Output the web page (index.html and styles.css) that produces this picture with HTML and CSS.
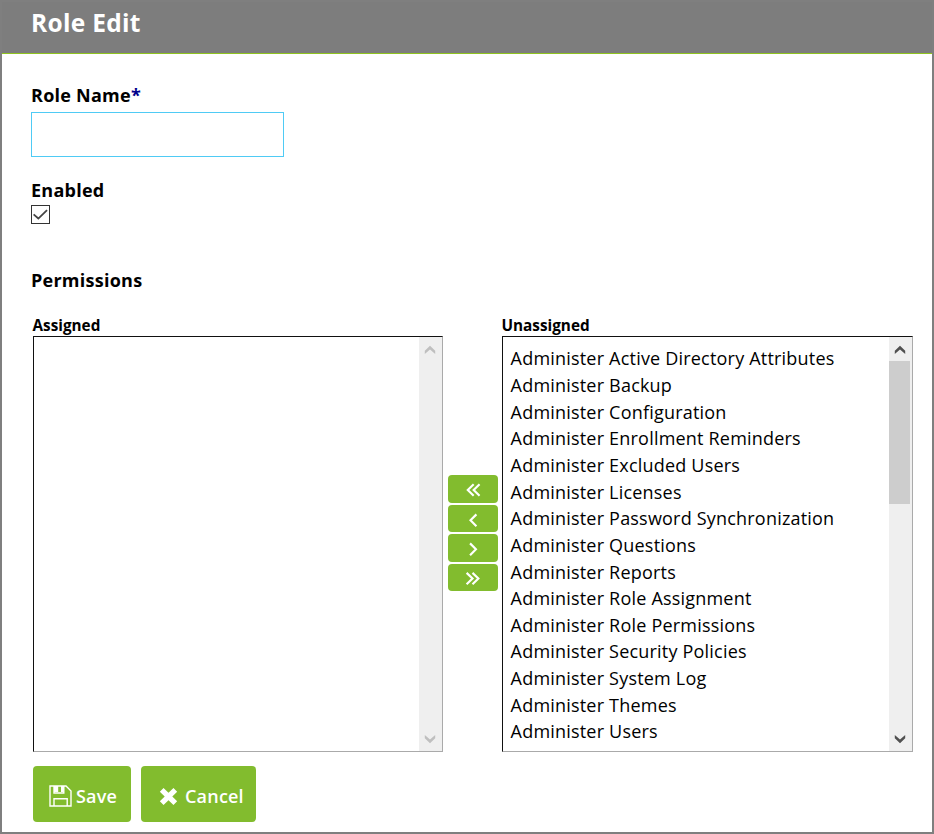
FILE: index.html
```html
<!DOCTYPE html>
<html lang="en">
<head>
<meta charset="utf-8">
<title>Role Edit</title>
<link rel="stylesheet" href="styles.css">
</head>
<body>
<div class="window">
  <header class="header"><h1>Role Edit</h1></header>
  <main class="form">
    <label class="label" for="role">Role Name<span class="required">*</span></label>
    <input class="text-input" id="role" type="text">
    <div class="label enabled-label">Enabled</div>
    <div class="checkbox" role="checkbox" aria-checked="true" aria-label="Enabled">
      <svg viewBox="0 0 19 19"><path d="M1.800 9.300 7.100 14 16.800 4.500"/></svg>
    </div>
    <h2 class="label permissions-label">Permissions</h2>
    <div class="picker">
      <section class="column">
        <h3>Assigned</h3>
        <div class="listbox">
          <ul></ul>
          <div class="scrollbar disabled">
            <svg class="up" viewBox="0 0 12 10"><path d="M.8 9V5.800L6 .8l5.200 5V9L6 4.600z"/></svg>
            <svg class="down" viewBox="0 0 12 10"><path d="M.8 1v3.200l5.200 5 5.200-5V1L6 5.400z"/></svg>
          </div>
        </div>
      </section>
      <div class="moves">
        <button aria-label="Assign all"><svg viewBox="0 0 50 27"><path d="M26.200 9.200 20.200 15l6 5.800M32.200 9.200l-6 5.800 6 5.800"/></svg></button>
        <button aria-label="Assign"><svg viewBox="0 0 50 27"><path d="M29 9.300 23 15.300l6 6"/></svg></button>
        <button aria-label="Unassign"><svg viewBox="0 0 50 27"><path d="M22.500 9.300l6 6-6 6"/></svg></button>
        <button aria-label="Unassign all"><svg viewBox="0 0 50 27"><path d="M19 8.800l6 5.800-6 5.800M25 8.800l6 5.800-6 5.800"/></svg></button>
      </div>
      <section class="column">
        <h3>Unassigned</h3>
        <div class="listbox">
          <ul>
            <li>Administer Active Directory Attributes</li>
            <li>Administer Backup</li>
            <li>Administer Configuration</li>
            <li>Administer Enrollment Reminders</li>
            <li>Administer Excluded Users</li>
            <li>Administer Licenses</li>
            <li>Administer Password Synchronization</li>
            <li>Administer Questions</li>
            <li>Administer Reports</li>
            <li>Administer Role Assignment</li>
            <li>Administer Role Permissions</li>
            <li>Administer Security Policies</li>
            <li>Administer System Log</li>
            <li>Administer Themes</li>
            <li>Administer Users</li>
          </ul>
          <div class="scrollbar">
            <svg class="up" viewBox="0 0 12 10"><path d="M.8 9V5.800L6 .8l5.200 5V9L6 4.600z"/></svg>
            <div class="thumb"></div>
            <svg class="down" viewBox="0 0 12 10"><path d="M.8 1v3.200l5.200 5 5.200-5V1L6 5.400z"/></svg>
          </div>
        </div>
      </section>
    </div>
    <div class="actions">
      <button class="save">
        <svg viewBox="0 0 23 22"><path class="line" d="M1 1h16l5 5v15H1zM5 21v-7.300h13.200V21M5 1v7h9.800V1"/><path d="M5 1h4.200v6H5zM12 1h2.800v6H12z"/></svg>
        <span>Save</span>
      </button>
      <button class="cancel">
        <svg viewBox="0 0 18 18"><path d="M4.300.9 9 5.500 13.700.9l3.500 3.500-4.600 4.600 4.600 4.600-3.500 3.500L9 12.500l-4.700 4.600-3.500-3.500L5.400 9 .8 4.400z"/></svg>
        <span>Cancel</span>
      </button>
    </div>
  </main>
</div>
</body>
</html>
```
FILE: styles.css
```css
* { box-sizing: border-box; }
body {
  margin: 0;
  font-family: "Open Sans", sans-serif;
  color: #000;
  background: #fff;
}
h1, h2, h3, ul { margin: 0; padding: 0; }
button { border: 0; padding: 0; color: #fff; background: #82bc2e; font-family: inherit; }
.window {
  height: 834px;
  border: 2px solid #7f7f7f;
  overflow: hidden;
}
.header {
  height: 52px;
  padding: 3px 0 0 29px;
  background: #7d7d7d;
  border-bottom: 1px solid #8fc31f;
}
.header h1 { font-size: 24.5px; line-height: 36px; font-weight: 700; letter-spacing: 0.3px; color: #fff; }
.form { padding: 28px 18px 0 29px; }
.label {
  display: block;
  font-size: 18px;
  line-height: 26px;
  font-weight: 700;
  letter-spacing: 0.25px;
}
.required { color: #00008b; }
.text-input {
  display: block;
  width: 253px;
  height: 45px;
  margin-top: 4px;
  border: 1px solid #4fcbf5;
  outline: 0;
  background: #fff;
}
.enabled-label { margin-top: 20px; }
.checkbox {
  width: 19px;
  height: 19px;
  margin-top: 2px;
  border: 1px solid #333;
}
.checkbox svg { display: block; width: 17px; height: 17px; fill: none; stroke: #444; stroke-width: 2; }
.permissions-label { margin-top: 43px; }
.picker { display: flex; margin: 21px 0 0 2px; }
.column { width: 410px; }
.column h3 { height: 22px; font-size: 15.3px; line-height: 22px; font-weight: 700; margin-left: -0.5px; }
.listbox {
  display: flex;
  height: 416px;
  border: 1px solid #aaa;
  border-top-color: #111;
  border-left-color: #111;
}
.listbox ul { flex: 1; padding: 8.4px 0 0 7.6px; list-style: none; }
.listbox li { font-size: 18px; line-height: 26.64px; letter-spacing: 0.2px; white-space: nowrap; }
.scrollbar {
  display: flex;
  flex-direction: column;
  align-items: center;
  width: 23px;
  padding: 8px 2px 0 0;
  background: #efefef;
  fill: #505050;
}
.disabled { fill: #bfbfbf; }
.scrollbar svg { width: 12px; height: 10px; }
.scrollbar .down { margin: auto 0 7px; }
.thumb { width: 21px; height: 143px; margin-top: 6px; background: #cdcdcd; }
.moves {
  display: flex;
  flex-direction: column;
  gap: 2px;
  width: 50px;
  margin: 161px 4px 0 5px;
}
.column:last-child { width: 411px; }
.moves button { height: 27.6px; border-radius: 4px; }
.moves svg { display: block; width: 49px; height: 27px; fill: none; stroke: #fff; stroke-width: 2.2; }
.actions { display: flex; gap: 10px; margin: 14px 0 0 2px; }
.actions button {
  display: flex;
  align-items: center;
  height: 56px;
  padding-top: 4px;
  border-radius: 4px;
  font-size: 18px;
  line-height: 26px;
  font-weight: 600;
  letter-spacing: 0.2px;
}
.actions svg { fill: #fff; }
.save { width: 98px; padding-left: 16px; gap: 4px; }
.save svg { width: 23px; height: 22px; }
.save .line { fill: none; stroke: #fff; stroke-width: 1.4; }
.cancel { width: 115px; padding-left: 18px; gap: 7px; }
.cancel svg { width: 19px; height: 19px; }
```
